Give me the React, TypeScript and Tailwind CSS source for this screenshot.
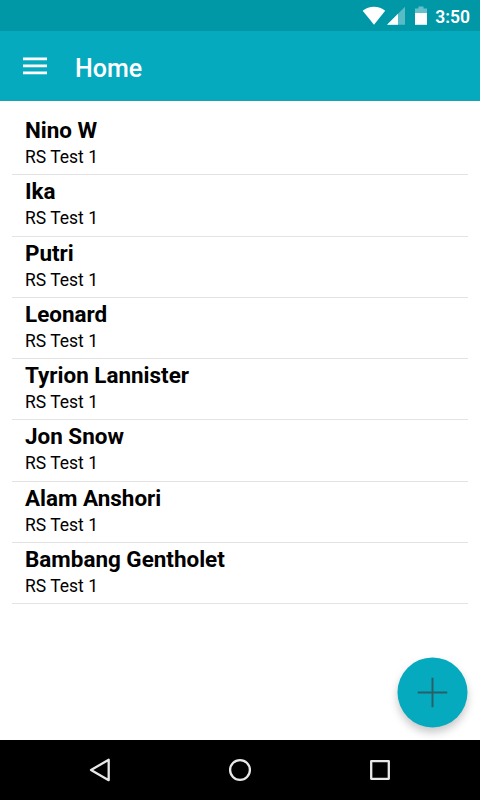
const contacts = [
  'Nino W',
  'Ika',
  'Putri',
  'Leonard',
  'Tyrion Lannister',
  'Jon Snow',
  'Alam Anshori',
  'Bambang Gentholet',
];

function StatusBar() {
  return (
    <div className="flex h-[31px] shrink-0 items-center justify-end bg-[#0097a7] pr-[10px] text-white">
      <svg className="h-[31px] w-[75px]" viewBox="360 0 75 31" fill="currentColor">
        <path d="M362.700 10.800 C369 5.500 379 5.500 385.200 10.800 L374 24.700 Z" />
        <path d="M387 24.800 L405 6.800 V24.800 Z" opacity=".35" />
        <path d="M387 24.800 L398 13.800 V24.800 Z" />
        <path d="M415 8.500 h3.500 v-2 h5 v2 h3.500 V13 h-12 Z" opacity=".4" />
        <path d="M415 13h12v11.800h-12Z" />
      </svg>
      <span className="pt-[3px] text-[17.500px] font-semibold">3:50</span>
    </div>
  );
}

function AppBar() {
  return (
    <header className="flex h-[70px] shrink-0 items-center border-b border-[#1ba0b2] bg-[#06aabf] pl-[23px] text-white">
      <svg className="h-[24px] w-[24px]" viewBox="0 0 24 24" fill="currentColor">
        <path d="M0 3.500h24v2.700H0zM0 10.600h24v2.700H0zM0 17.600h24v2.700H0z" />
      </svg>
      <h1 className="ml-[28px] pt-[6px] text-[25px] font-medium">Home</h1>
    </header>
  );
}

function ContactRow({ name }: { name: string }) {
  return (
    <li className="h-[61.250px] border-b border-[#e3e3e3] pl-[13px] pt-[3px] text-black">
      <div className="text-[22.450px] font-bold leading-[27px]">{name}</div>
      <div className="text-[17.500px] leading-[26.500px]">RS Test 1</div>
    </li>
  );
}

function NavigationBar() {
  return (
    <nav className="flex h-[60px] shrink-0 items-center justify-center gap-[116px] bg-black text-[#e8e8e8]">
      <svg className="size-6" viewBox="0 0 24 24" fill="none" stroke="currentColor" strokeWidth="2.300" strokeLinejoin="round">
        <path d="M20.700 1.800 V22.200 L3 12 Z" />
      </svg>
      <svg className="size-6" viewBox="0 0 24 24" fill="none" stroke="currentColor" strokeWidth="2.300">
        <circle cx="12" cy="12" r="9.900" />
      </svg>
      <svg className="size-6" viewBox="0 0 24 24" fill="none" stroke="currentColor" strokeWidth="2.300" strokeLinejoin="round">
        <rect x="3.200" y="3.200" width="17.600" height="17.600" />
      </svg>
    </nav>
  );
}

export default function App() {
  return (
    <div className="relative flex h-[800px] w-[480px] flex-col overflow-hidden bg-white font-[Roboto,sans-serif]">
      <StatusBar />
      <AppBar />
      <main className="flex-1 px-3 pt-[13px]">
        <ul>
          {contacts.map((name) => (
            <ContactRow key={name} name={name} />
          ))}
        </ul>
      </main>
      <button className="absolute right-[13px] bottom-[73px] flex size-[70px] translate-x-[0.5px] translate-y-[0.4px] items-center justify-center rounded-full bg-[#06aabf] text-[#276068] shadow-[0_5px_9px_rgba(0,0,0,0.22)]">
        <svg className="size-[30px]" viewBox="0 0 30 30" fill="none" stroke="currentColor" strokeWidth="2">
          <path d="M15 0v30M0 15h30" />
        </svg>
      </button>
      <NavigationBar />
    </div>
  );
}
